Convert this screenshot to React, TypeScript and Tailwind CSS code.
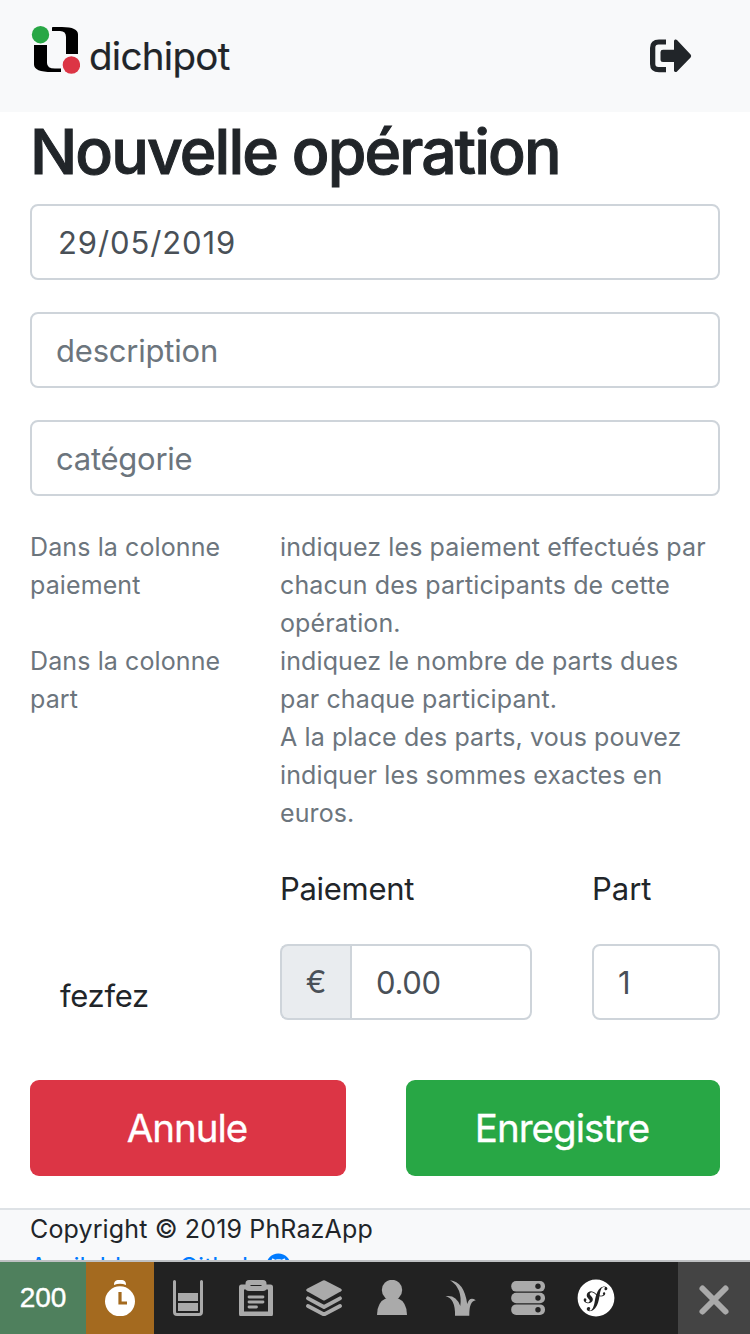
import React from "react";
import { FaGithub, FaSymfony } from "react-icons/fa";

const field =
  "block h-[76px] w-full rounded-lg border-2 border-[#ced4da] bg-white pt-[1px] text-[31px] text-[#495057] outline-none placeholder:text-[#6c757d] placeholder:opacity-100";

function Logo() {
  return (
    <svg className="mt-[25px] h-[50px] w-[50px] shrink-0" viewBox="0 0 50 50">
      <path d="M4 20H17V38Q17 43.500 25 43.500H31V47H22Q4 47 4 39.500Z" fill="#000" />
      <path d="M22 2.500Q22 2 23 2H32Q48 2 48 9.500V29H36V12Q36 6 30 6H22Z" fill="#000" />
      <circle cx="10.500" cy="9.700" r="8.700" fill="#28a745" />
      <circle cx="41.400" cy="40" r="8.700" fill="#dc3545" />
    </svg>
  );
}

function SignOutIcon() {
  return (
    <svg className="h-[34px] w-[42px]" viewBox="0 0 42 34" fill="#212529">
      <path d="M16 0.500V5.500H8.500Q5.300 5.500 5.300 8.500V25Q5.300 28 8.500 28H16V33.300H9Q0 33.300 0 25V9Q0 0.500 9 0.500Z" />
      <path d="M24 2C24 0.500 26 0 27 1L40.600 15.500Q41.800 17 40.600 18.500L27 32.500C26 33.500 24 33 24 31.500V23H13Q10.500 23 10.500 20.500V13Q10.500 10.700 13 10.700H24Z" />
    </svg>
  );
}

function TimeIcon() {
  return (
    <svg className="h-9 w-9" viewBox="0 0 36 36">
      <path d="M12 4.200Q12 -.2 18 -.2T24 4.200V5Q18 2.500 12 5Z" fill="#fff" />
      <circle cx="18" cy="21.300" r="15" fill="#fff" />
      <path d="M18 12V23H25" fill="none" stroke="#a46a1f" strokeWidth="3.200" />
    </svg>
  );
}

function CacheIcon() {
  return (
    <svg className="h-9 w-9" viewBox="0 0 36 36">
      <path d="M4.500 1.500V32Q4.500 34.500 7 34.500H29Q31.500 34.500 31.500 32V1.500" fill="none" stroke="#aaa" strokeWidth="3" strokeLinecap="round" />
      <path d="M8 13H28V21H8ZM8 23H28V31H8Z" fill="#aaa" />
    </svg>
  );
}

function FormIcon() {
  return (
    <svg className="h-9 w-9" viewBox="0 0 36 36" fill="none" stroke="#aaa">
      <rect x="3.500" y="7" width="29" height="27" strokeWidth="5" strokeLinejoin="round" />
      <rect x="10" y="2.500" width="16" height="6" rx="1" strokeWidth="5" fill="#222" />
      <path d="M11 17H25M11 22H25M11 27H18.500" strokeWidth="2.800" strokeLinecap="round" />
    </svg>
  );
}

function LayersIcon() {
  return (
    <svg className="h-9 w-9" viewBox="0 0 36 36">
      <path d="M17 .4Q18 0 19 .4L35 8.700Q36.700 10 35 11.300L19 20.300Q18 20.800 17 20.300L1 11.300Q-.7 10 1 8.700Z" fill="#aaa" />
      <path d="M2 18.300L18 27L34 18.300M2 26L18 34.500L34 26" fill="none" stroke="#aaa" strokeWidth="3.800" strokeLinecap="round" strokeLinejoin="round" />
    </svg>
  );
}

function UserIcon() {
  return (
    <svg className="h-9 w-9" viewBox="0 0 36 36" fill="#aaa">
      <circle cx="18" cy="10" r="10.200" />
      <path d="M3 35Q3 22 12.500 18H23.500Q33 22 33 35Z" />
    </svg>
  );
}

function TwigIcon() {
  return (
    <svg className="h-9 w-9" viewBox="0 0 36 36" fill="#aaa">
      <path d="M13 35.700Q13.500 18.500 3.500 16.300Q14 14.500 18.300 26Q20.500 8 8 .3Q22 1.500 25.200 24Q27.500 16 33.800 20.200Q27 21 27.300 35.700Z" />
    </svg>
  );
}

function ServerIcon() {
  return (
    <svg className="h-9 w-9" viewBox="0 0 36 36">
      {[1, 12.7, 24.4].map((y) => (
        <g key={y}>
          <rect x="1.200" y={y} width="33.800" height="10.600" rx="5" fill="#aaa" />
          <circle cx="28" cy={y + 5.3} r="2.700" fill="#222" />
        </g>
      ))}
    </svg>
  );
}

function CloseIcon() {
  return (
    <svg className="h-8 w-8" viewBox="0 0 32 32">
      <path d="M4.500 4.500L27.500 27.500M27.500 4.500L4.500 27.500" stroke="#aaa" strokeWidth="6" strokeLinecap="round" />
    </svg>
  );
}

export default function App() {
  const tools = [CacheIcon, FormIcon, LayersIcon, UserIcon, TwigIcon, ServerIcon];
  return (
    <div className="relative flex h-[1334px] w-[750px] flex-col overflow-hidden bg-white font-['Inter','Liberation_Sans',sans-serif] text-[#212529]">
      <header className="flex h-28 shrink-0 bg-[#f8f9fa] pl-[30px] pr-[58px]">
        <Logo />
        <span className="ml-[9px] mt-[26px] text-[38.500px] leading-[60px] tracking-[-0.7px] [-webkit-text-stroke:0.2px]">dichipot</span>
        <button className="ml-auto mt-[39px] h-[34px]" aria-label="Déconnexion">
          <SignOutIcon />
        </button>
      </header>

      <main className="flex h-[1096px] shrink-0 flex-col px-[30px]">
        <h1 className="mt-[1px] whitespace-nowrap text-[62.500px] font-medium leading-[76px] tracking-[-1.9px] [-webkit-text-stroke:1px]">Nouvelle opération</h1>
        <div className="mt-[15px] flex flex-col gap-8">
          <input className={`${field} pl-[26px] tracking-[0.9px]`} defaultValue="29/05/2019" />
          <input className={`${field} pl-6 tracking-[-0.2px]`} placeholder="description" />
          <input className={`${field} pl-6 tracking-[-0.25px]`} placeholder="catégorie" />
        </div>

        <dl className="mt-8 grid grid-cols-[250px_1fr] whitespace-nowrap text-[25px] leading-[38px] tracking-[0.11px] text-[#6c757d]">
          <dt>Dans la colonne<br />paiement</dt>
          <dd>indiquez les paiement effectués par<br />chacun des participants de cette<br />opération.</dd>
          <dt>Dans la colonne<br />part</dt>
          <dd>indiquez le nombre de parts dues<br />par chaque participant.<br />A la place des parts, vous pouvez<br />indiquer les sommes exactes en<br />euros.</dd>
        </dl>

        <div className="mt-[33px] grid grid-cols-[250px_252px_128px] text-[31px] leading-[48px]">
          <span />
          <span className="tracking-[-0.3px]">Paiement</span>
          <span className="pl-[60px]">Part</span>
        </div>
        <div className="mt-[31px] flex h-[76px]">
          <span className="w-[250px] pl-[30px] pt-[28px] text-[31px] leading-[48px] tracking-[-0.3px]">fezfez</span>
          <div className="flex w-[252px]">
            <span className="flex w-[70px] shrink-0 items-center justify-center rounded-l-lg border-2 border-r-0 border-[#ced4da] bg-[#e9ecef] pt-[1px] text-[31px] text-[#495057]">€</span>
            <input className={`${field} rounded-l-none pl-6 tracking-[-0.3px]`} defaultValue="0.00" />
          </div>
          <div className="ml-[60px] w-32">
            <input className={`${field} pl-6`} defaultValue="1" />
          </div>
        </div>

        <div className="mt-[60px] flex gap-[60px] text-[38.500px] tracking-[-1px] text-white [-webkit-text-stroke:0.3px]">
          <button className="h-24 w-[316px] rounded-[9px] bg-[#dc3545] pr-[2px] pt-[1px]">Annule</button>
          <button className="h-24 w-[314px] rounded-[9px] bg-[#28a745] pr-[2px] pt-[1px]">Enregistre</button>
        </div>
      </main>

      <footer className="h-[126px] shrink-0 border-t-2 border-[#dee2e6] bg-[#f8f9fa] px-[30px] text-[25px] leading-[38px] tracking-[0.14px]">
        <p>Copyright © 2019 PhRazApp</p>
        <a className="flex items-center tracking-normal text-[#007bff]">
          Available on Github
          <FaGithub className="mb-[3px] ml-[9px] h-[25px] w-[25px]" />
        </a>
      </footer>

      <nav className="absolute inset-x-0 bottom-0 flex h-[74px] border-t-2 border-[#bfc1c3] bg-[#222]">
        <span className="flex w-[86px] items-center justify-center bg-[#4f805d] font-['Liberation_Sans',sans-serif] text-[28px] text-white [-webkit-text-stroke:0.4px]">200</span>
        <span className="flex w-[68px] items-center justify-center bg-[#a46a1f]"><TimeIcon /></span>
        {tools.map((Icon, i) => (
          <span key={i} className="flex w-[68px] items-center justify-center"><Icon /></span>
        ))}
        <span className="flex w-[68px] items-center justify-center text-white"><FaSymfony className="h-[38px] w-[38px]" /></span>
        <button className="ml-auto flex w-[72px] items-center justify-center bg-[#444] pt-1" aria-label="Fermer"><CloseIcon /></button>
      </nav>
    </div>
  );
}
